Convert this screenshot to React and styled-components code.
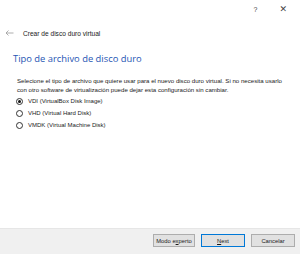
import React from "react";
import styled, { createGlobalStyle } from "styled-components";

const Global = createGlobalStyle`
  html, body {
    margin: 0;
    padding: 0;
    background: #ffffff;
  }
  body {
    font-family: "Liberation Sans", "DejaVu Sans", sans-serif;
  }
`;

const Window = styled.div`
  width: 300px;
  height: 254px;
  display: flex;
  flex-direction: column;
  background: #ffffff;
  overflow: hidden;
`;

const TitleBar = styled.div`
  height: 18px;
  display: flex;
  justify-content: flex-end;
  align-items: center;
  padding-right: 13px;
  gap: 22px;
`;

const TitleIcon = styled.span`
  font-size: ${p => p.size || 8}px;
  line-height: 1;
  color: #444;
`;

const Header = styled.div`
  display: flex;
  align-items: center;
  gap: 9px;
  padding: 8px 0 0 5px;
  height: 14px;
`;

const Caption = styled.span`
  font-size: 6.6px;
  color: #1a1a1a;
`;

const Body = styled.div`
  flex: 1;
  padding: 12px 12px 0 13px;
`;

const Heading = styled.h1`
  margin: 0;
  font-family: "Open Sans", "Liberation Sans", sans-serif;
  font-weight: 400;
  font-size: 9.4px;
  color: #1f56b4;
`;

const Text = styled.p`
  margin: 11px 0 0 4px;
  font-size: 6.1px;
  line-height: 9px;
  white-space: nowrap;
  color: #1a1a1a;
`;

const Options = styled.div`
  display: flex;
  flex-direction: column;
  gap: 4px;
  margin: 3px 0 0 3px;
`;

const Option = styled.label`
  display: flex;
  align-items: center;
  gap: 5px;
  height: 8px;
  font-size: 6px;
  color: #1a1a1a;
`;

const Radio = styled.span`
  width: 7px;
  height: 7px;
  border-radius: 50%;
  border: 1px solid #333;
  box-sizing: border-box;
  display: flex;
  align-items: center;
  justify-content: center;
  &::after {
    content: "";
    width: 3px;
    height: 3px;
    border-radius: 50%;
    background: ${p => (p.checked ? "#111" : "transparent")};
  }
`;

const Footer = styled.div`
  height: 23px;
  background: #f0f0f0;
  border-top: 1px solid #e6e6e6;
  display: flex;
  justify-content: flex-end;
  align-items: center;
  gap: 6px;
  padding: 0 5px 2px 0;
`;

const Button = styled.button`
  width: ${p => p.w || 44}px;
  height: 13px;
  padding: 0;
  font-family: "Liberation Sans", sans-serif;
  font-size: 5.8px;
  color: #1a1a1a;
  background: #e1e1e1;
  border: 1px solid ${p => (p.primary ? "#0078d7" : "#adadad")};
  u {
    text-decoration: underline;
  }
`;

const Arrow = () => (
  <svg width="9" height="6" viewBox="0 0 9 6">
    <path d="M8.5 3H1M3.5 0.5L1 3l2.5 2.5" stroke="#9a9a9a" strokeWidth="0.8" fill="none" />
  </svg>
);

export default function App() {
  return (
    <>
      <Global />
      <Window>
        <TitleBar>
          <TitleIcon size={7}>?</TitleIcon>
          <TitleIcon size={9}>✕</TitleIcon>
        </TitleBar>
        <Header>
          <Arrow />
          <Caption>Crear de disco duro virtual</Caption>
        </Header>
        <Body>
          <Heading>Tipo de archivo de disco duro</Heading>
          <Text>
            Selecione el tipo de archivo que quiere usar para el nuevo disco duro virtual. Si no necesita usarlo
            <br />
            con otro software de virtualización puede dejar esta configuración sin cambiar.
          </Text>
          <Options>
            <Option><Radio checked />VDI (VirtualBox Disk Image)</Option>
            <Option><Radio />VHD (Virtual Hard Disk)</Option>
            <Option><Radio />VMDK (Virtual Machine Disk)</Option>
          </Options>
        </Body>
        <Footer>
          <Button w={42}>Modo e<u>x</u>perto</Button>
          <Button primary><u>N</u>ext</Button>
          <Button>Cancelar</Button>
        </Footer>
      </Window>
    </>
  );
}
